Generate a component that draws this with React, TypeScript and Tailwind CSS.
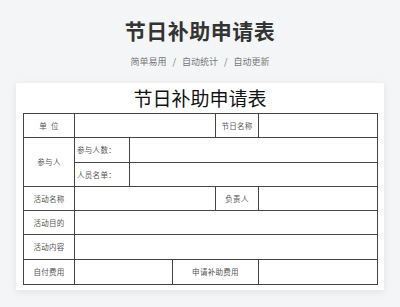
const cell = "border border-[#444] text-center align-middle text-[7.5px] text-[#555] tracking-[0.3px] p-0";
const cellL = "border border-[#444] text-left align-middle text-[7.5px] text-[#555] tracking-[0.3px] pl-[2px]";

const App = () => {
  return (
    <div
      className="w-[400px] h-[307px] bg-[#f4f5f7] overflow-hidden flex flex-col items-center"
      style={{ fontFamily: '"Noto Sans CJK SC", "Noto Sans", sans-serif' }}
    >
      {/* header */}
      <h1 className="mt-[19px] text-[21px] leading-[22px] font-bold text-[#333] tracking-[0.5px]">节日补助申请表</h1>
      <div className="mt-[14px] text-[9px] leading-[14px] text-[#777] flex gap-[6px]">
        <span>简单易用</span>
        <span>/</span>
        <span>自动统计</span>
        <span>/</span>
        <span>自动更新</span>
      </div>

      {/* sheet */}
      <div className="mt-[14px] w-[368px] h-[207px] bg-white shadow-[0_2px_8px_rgba(0,0,0,0.08)] px-[7px] pt-[5px]">
        <div className="text-center text-[19px] leading-[20px] text-[#111] h-[25px]">节日补助申请表</div>
        <table className="w-[354px] table-fixed border-collapse">
          <colgroup>
            <col className="w-[51px]" />
            <col className="w-[55px]" />
            <col className="w-[43px]" />
            <col className="w-[43px]" />
            <col className="w-[43px]" />
            <col className="w-[119px]" />
          </colgroup>
          <tbody>
            <tr className="h-[24px]">
              <td className={cell}>单&nbsp;&nbsp;位</td>
              <td className={cell} colSpan={3}></td>
              <td className={cell}>节日名称</td>
              <td className={cell}></td>
            </tr>
            <tr className="h-[25px]">
              <td className={cell} rowSpan={2}>参与人</td>
              <td className={cellL}>参与人数：</td>
              <td className={cell} colSpan={4}></td>
            </tr>
            <tr className="h-[24px]">
              <td className={cellL}>人员名单：</td>
              <td className={cell} colSpan={4}></td>
            </tr>
            <tr className="h-[24px]">
              <td className={cell}>活动名称</td>
              <td className={cell} colSpan={3}></td>
              <td className={cell}>负责人</td>
              <td className={cell}></td>
            </tr>
            <tr className="h-[24px]">
              <td className={cell}>活动目的</td>
              <td className={cell} colSpan={5}></td>
            </tr>
            <tr className="h-[25px]">
              <td className={cell}>活动内容</td>
              <td className={cell} colSpan={5}></td>
            </tr>
            <tr className="h-[25px]">
              <td className={cell}>自付费用</td>
              <td className={cell} colSpan={2}></td>
              <td className={cell} colSpan={2}>申请补助费用</td>
              <td className={cell}></td>
            </tr>
          </tbody>
        </table>
      </div>
    </div>
  );
};

export default App;
